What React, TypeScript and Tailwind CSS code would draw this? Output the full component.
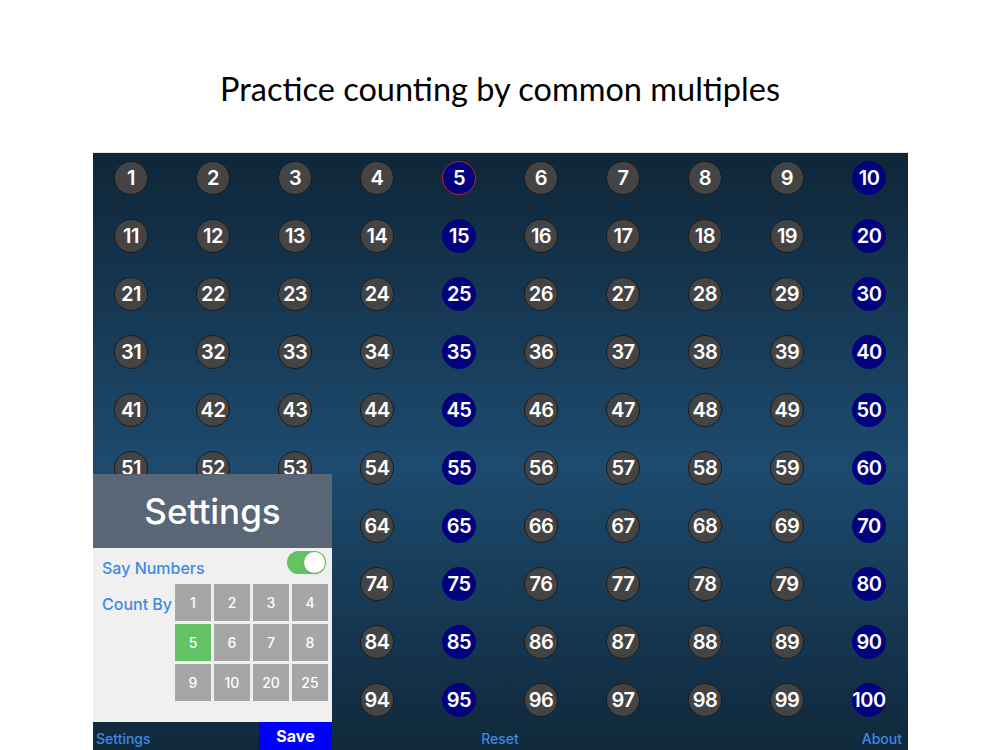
import React from "react";

const countOptions = [1, 2, 3, 4, 5, 6, 7, 8, 9, 10, 20, 25];

function Circle({ n }: { n: number }) {
  const multiple = n % 5 === 0;
  const selected = n === 5;
  return (
    <div
      className={
        "w-[34px] h-[34px] rounded-full flex items-center justify-center text-white text-[20px] leading-none font-semibold border " +
        (multiple
          ? selected
            ? "bg-[#02027f] border-[#c0202a]"
            : "bg-[#02027f] border-[#02027f]"
          : "bg-[#444444] border-[#1c1c1c]")
      }
      style={{ fontFamily: 'Inter, "Liberation Sans", Arial, sans-serif' }}
    >
      <span className="whitespace-nowrap tracking-[-0.5px]">{n}</span>
    </div>
  );
}

export default function App() {
  const nums = Array.from({ length: 100 }, (_, i) => i + 1);
  return (
    <div className="w-[1000px] h-[750px] bg-white overflow-hidden flex flex-col">
      <div
        className="h-[152px] flex items-start justify-center pt-[69px] text-[32.5px] leading-[40px] text-black"
        style={{ fontFamily: 'Lato, "Open Sans", sans-serif' }}
      >
        Practice counting by common multiples
      </div>
      <div className="relative ml-[93px] w-[815px] h-[598px] bg-[linear-gradient(to_bottom,#0f2638_0%,#1d4a6e_52%,#10283b_100%)] flex flex-col border-t border-[#e6e6e6]">
        <div className="pl-[21px] pt-[8px] grid grid-cols-[repeat(10,34px)] gap-x-[48px] gap-y-[24px]">
          {nums.map((n) => (
            <Circle key={n} n={n} />
          ))}
        </div>
        <div
          className="mt-auto h-[24px] flex items-center px-[3px] text-[14px] text-[#3d8ae4] font-medium"
          style={{ fontFamily: 'Inter, "Liberation Sans", Arial, sans-serif' }}
        >
          <span className="flex-1 text-left">Settings</span>
          <span className="ml-[2px]">Reset</span>
          <span className="flex-1 text-right pr-[3px]">About</span>
        </div>

        {/* Settings popover */}
        <div
          className="absolute left-0 bottom-[28px] w-[239px] flex flex-col"
          style={{ fontFamily: 'Inter, "Liberation Sans", Arial, sans-serif' }}
        >
          <div className="h-[74px] bg-[#586676] flex items-center justify-center text-white text-[35px] font-medium">
            Settings
          </div>
          <div className="h-[174px] bg-[#f0f0f0] flex flex-col">
            <div className="flex items-start justify-between pl-[9px] pr-[6px] pt-[3px] h-[27px]">
              <span className="text-[#3d8ae4] text-[16px] mt-[9px] font-medium leading-none">Say Numbers</span>
              <div className="w-[39px] h-[23px] rounded-full bg-[#63c364] relative">
                <div className="absolute right-[1px] top-[1px] w-[21px] h-[21px] rounded-full bg-white shadow" />
              </div>
            </div>
            <div className="flex mt-[9px]">
              <span className="w-[82px] pl-[9px] pt-[12px] text-[#3d8ae4] text-[16px] font-medium leading-none whitespace-nowrap">Count By</span>
              <div className="grid grid-cols-[repeat(4,36px)] gap-x-[3px] gap-y-[3px]">
                {countOptions.map((c) => (
                  <div
                    key={c}
                    className={
                      "h-[37px] flex items-center justify-center text-white text-[14px] font-medium " +
                      (c === 5 ? "bg-[#63c364]" : "bg-[#a6a6a6]")
                    }
                  >
                    {c}
                  </div>
                ))}
              </div>
            </div>
          </div>
        </div>
        <div
          className="absolute left-[166px] bottom-0 w-[73px] h-[28px] bg-[#0000ff] rounded-br-[3px] flex items-center justify-center text-white text-[16px] font-bold"
          style={{ fontFamily: 'Inter, "Liberation Sans", Arial, sans-serif' }}
        >
          Save
        </div>
      </div>
    </div>
  );
}
